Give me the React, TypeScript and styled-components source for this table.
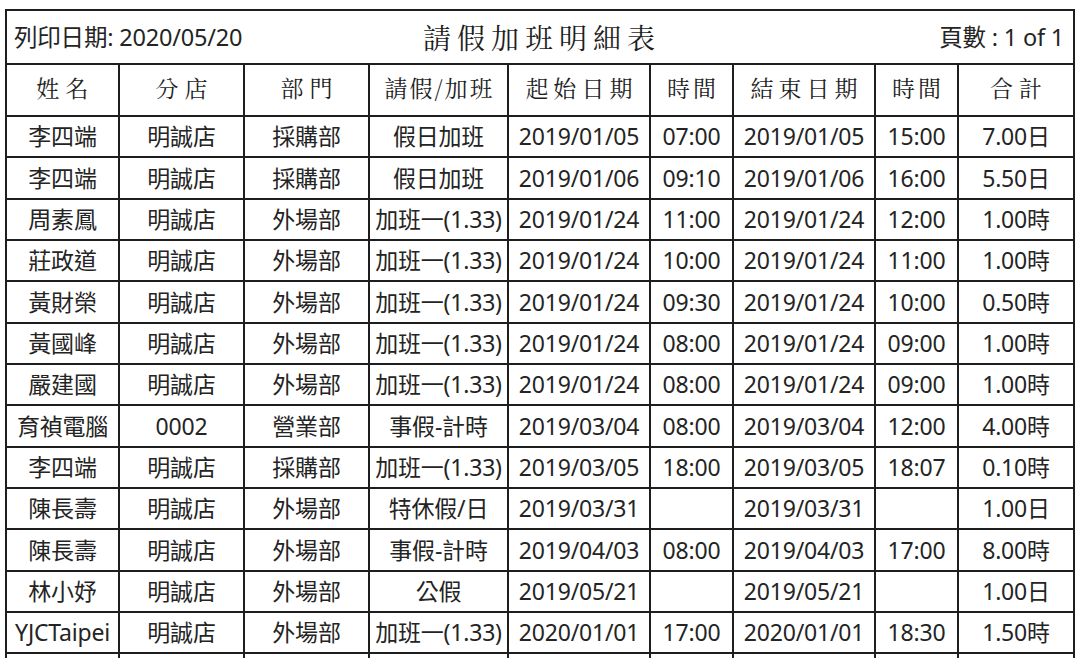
import React from "react";
import styled, { createGlobalStyle } from "styled-components";

const Global = createGlobalStyle`
  html, body { margin: 0; padding: 0; background: #ffffff; }
  body { overflow: hidden; width: 1080px; height: 658px; }
  #root { width: 1080px; height: 658px; overflow: hidden; }
`;

const Page = styled.div`
  width: 1080px;
  height: 658px;
  padding-top: 9px;
  padding-left: 5px;
  box-sizing: border-box;
  overflow: hidden;
  font-family: "Noto Sans", "Noto Sans CJK TC", sans-serif;
  color: #242424;
`;

const Sheet = styled.table`
  border-collapse: collapse;
  table-layout: fixed;
  width: 1068px;
  border: 2px solid #1e1e1e;
`;

const Cell = styled.td`
  border: 2px solid #1e1e1e;
  padding: 0;
  text-align: center;
  vertical-align: middle;
  font-size: 23px;
  line-height: 1;
  white-space: nowrap;
  overflow: hidden;
  letter-spacing: -0.2px;
`;

const HeadCell = styled.th<{ $spacing: number }>`
  border: 2px solid #1e1e1e;
  padding: 0 0 5px ${(p) => p.$spacing}px;
  text-align: center;
  vertical-align: middle;
  font-family: "AR PL UKai TW", "Noto Serif CJK TC", "Noto Sans CJK TC", serif;
  font-weight: 400;
  font-size: 23px;
  line-height: 1;
  letter-spacing: ${(p) => p.$spacing}px;
  white-space: nowrap;
  color: #1e1e1e;
`;

const BandRow = styled.tr`
  height: 54px;
`;

const HeadRow = styled.tr`
  height: 52px;
`;

const DataRow = styled.tr<{ $h: number }>`
  height: ${(p) => p.$h}px;
`;

const Band = styled.div`
  display: grid;
  grid-template-columns: 1fr auto 1fr;
  align-items: center;
  padding: 0 9px 0 7px;
`;

const PrintDate = styled.span`
  font-size: 23.5px;
  text-align: left;
  padding-top: 2px;
  letter-spacing: -0.2px;
`;

const Title = styled.span`
  font-family: "AR PL UKai TW", "Noto Serif CJK TC", "Noto Sans CJK TC", serif;
  font-size: 28px;
  letter-spacing: 6px;
  padding-left: 6px;
  color: #1e1e1e;
`;

const PageNo = styled.span`
  font-size: 23.5px;
  text-align: right;
  padding-top: 2px;
`;

const widths = [113, 125, 125, 139, 142, 83, 142, 83, 116];

const headers: [string, number][] = [
  ["姓名", 6],
  ["分店", 6],
  ["部門", 6],
  ["請假/加班", 2],
  ["起始日期", 5],
  ["時間", 3],
  ["結束日期", 5],
  ["時間", 3],
  ["合計", 6],
];

const rows: string[][] = [
  ["李四端", "明誠店", "採購部", "假日加班", "2019/01/05", "07:00", "2019/01/05", "15:00", "7.00日"],
  ["李四端", "明誠店", "採購部", "假日加班", "2019/01/06", "09:10", "2019/01/06", "16:00", "5.50日"],
  ["周素鳳", "明誠店", "外場部", "加班一(1.33)", "2019/01/24", "11:00", "2019/01/24", "12:00", "1.00時"],
  ["莊政道", "明誠店", "外場部", "加班一(1.33)", "2019/01/24", "10:00", "2019/01/24", "11:00", "1.00時"],
  ["黃財榮", "明誠店", "外場部", "加班一(1.33)", "2019/01/24", "09:30", "2019/01/24", "10:00", "0.50時"],
  ["黃國峰", "明誠店", "外場部", "加班一(1.33)", "2019/01/24", "08:00", "2019/01/24", "09:00", "1.00時"],
  ["嚴建國", "明誠店", "外場部", "加班一(1.33)", "2019/01/24", "08:00", "2019/01/24", "09:00", "1.00時"],
  ["育禎電腦", "0002", "營業部", "事假-計時", "2019/03/04", "08:00", "2019/03/04", "12:00", "4.00時"],
  ["李四端", "明誠店", "採購部", "加班一(1.33)", "2019/03/05", "18:00", "2019/03/05", "18:07", "0.10時"],
  ["陳長壽", "明誠店", "外場部", "特休假/日", "2019/03/31", "", "2019/03/31", "", "1.00日"],
  ["陳長壽", "明誠店", "外場部", "事假-計時", "2019/04/03", "08:00", "2019/04/03", "17:00", "8.00時"],
  ["林小妤", "明誠店", "外場部", "公假", "2019/05/21", "", "2019/05/21", "", "1.00日"],
  ["YJCTaipei", "明誠店", "外場部", "加班一(1.33)", "2020/01/01", "17:00", "2020/01/01", "18:30", "1.50時"],
];

const heights = [41, 42, 41, 41, 42, 41, 41, 42, 41, 41, 42, 41, 41];

export default function App() {
  return (
    <Page>
      <Global />
      <Sheet>
        <colgroup>
          {widths.map((w, i) => (
            <col key={i} style={{ width: w }} />
          ))}
        </colgroup>
        <tbody>
          <BandRow>
            <Cell colSpan={9}>
              <Band>
                <PrintDate>列印日期: 2020/05/20</PrintDate>
                <Title>請假加班明細表</Title>
                <PageNo>頁數 : 1 of 1</PageNo>
              </Band>
            </Cell>
          </BandRow>
          <HeadRow>
            {headers.map(([h, s], i) => (
              <HeadCell key={i} $spacing={s}>
                {h}
              </HeadCell>
            ))}
          </HeadRow>
          {rows.map((r, i) => (
            <DataRow key={i} $h={heights[i]}>
              {r.map((c, j) => (
                <Cell key={j}>{c}</Cell>
              ))}
            </DataRow>
          ))}
          <DataRow $h={41}>
            {widths.map((_, j) => (
              <Cell key={j}>&nbsp;</Cell>
            ))}
          </DataRow>
        </tbody>
      </Sheet>
    </Page>
  );
}
